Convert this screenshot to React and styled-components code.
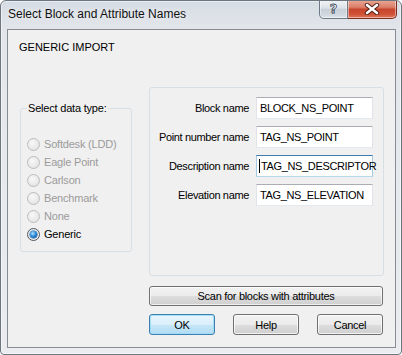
import React from "react";
import styled, { createGlobalStyle } from "styled-components";

const Global = createGlobalStyle`
  html, body { margin: 0; padding: 0; background: #ffffff; }
  body { font-family: "Liberation Sans", Arial, sans-serif; }
  #root { width: 402px; height: 355px; }
  * { box-sizing: border-box; }
`;

const Window = styled.div`
  width: 402px;
  height: 355px;
  border: 1px solid #6d757e;
  border-radius: 6px 6px 4px 4px;
  background: linear-gradient(to bottom, #d6dce3 0px, #e2e6eb 28px, #eaecef 100%);
  box-shadow: inset 0 0 0 1px rgba(255, 255, 255, 0.5);
  display: flex;
  flex-direction: column;
  overflow: hidden;
`;

const TitleBar = styled.div`
  height: 28px;
  flex: none;
  display: flex;
  align-items: flex-start;
  padding-left: 7px;
`;

const Title = styled.div`
  margin-top: 6px;
  font-size: 12px;
  line-height: 15px;
  color: #111;
  white-space: nowrap;
  text-shadow: 0 0 6px rgba(255, 255, 255, 0.9);
`;

const Controls = styled.div`
  margin-left: auto;
  margin-right: 4px;
  margin-top: -1px;
  display: flex;
`;

const CaptionButton = styled.div`
  height: 19px;
  width: ${(p) => (p.$close ? 49 : 29)}px;
  display: flex;
  align-items: center;
  justify-content: center;
  border: 1px solid ${(p) => (p.$close ? "#7c2d20" : "#6f7a86")};
  border-top: none;
  ${(p) => (p.$close ? "border-left: none;" : "")}
  border-radius: ${(p) => (p.$close ? "0 0 5px 0" : "0 0 0 5px")};
  background: ${(p) =>
    p.$close
      ? "linear-gradient(to bottom, #e9a898 0%, #dc8069 40%, #c8452d 52%, #cf5337 80%, #e1795a 100%)"
      : "linear-gradient(to bottom, #f2f4f6 0%, #dde2e8 45%, #c9d0d8 52%, #d3d9e0 85%, #e0e5ea 100%)"};
  box-shadow: inset 0 0 0 1px rgba(255, 255, 255, 0.45);
`;

const HelpGlyph = styled.span`
  font-family: "DejaVu Sans", sans-serif;
  font-size: 13px;
  line-height: 13px;
  font-weight: bold;
  color: #f5f7fa;
  -webkit-text-stroke: 0.8px #3e4a58;
  margin-top: -1px;
`;

const Client = styled.div`
  flex: 1;
  margin: 0 5px 6px 6px;
  border: 1px solid #878c92;
  background: #f0f0f0;
  padding: 11px 11px 0 11px;
  display: flex;
  flex-direction: column;
  font-size: 11px;
  color: #000;
`;

const Header = styled.div`
  font-size: 11px;
  line-height: 13px;
  height: 13px;
`;

const Body = styled.div`
  margin-top: 33px;
  display: flex;
  gap: 17px;
  align-items: flex-start;
`;

const GroupBox = styled.fieldset`
  margin: 15px 0 0 1px;
  width: 112px;
  height: 150px;
  border: 1px solid #d5dfe5;
  border-radius: 3px;
  padding: 0 0 0 6px;
  min-width: 0;
`;

const Legend = styled.legend`
  margin-left: 0;
  padding: 0 1px;
  font-size: 11px;
  line-height: 13px;
  letter-spacing: -0.2px;
`;

const RadioList = styled.div`
  padding-top: 20px;
  display: flex;
  flex-direction: column;
`;

const RadioRow = styled.div`
  height: 18px;
  display: flex;
  align-items: center;
  gap: 4px;
  color: ${(p) => (p.$disabled ? "#9b9b9b" : "#000")};
  letter-spacing: -0.2px;
  line-height: 13px;
  white-space: nowrap;
`;

const RadioCircle = styled.span`
  width: 13px;
  height: 13px;
  flex: none;
  border-radius: 50%;
  border: 1px solid ${(p) => (p.$checked ? "#4b5661" : "#bcbcbc")};
  background: ${(p) =>
    p.$checked
      ? "radial-gradient(circle at 50% 50%, #ffffff 0%, #e6e6e6 100%)"
      : "radial-gradient(circle at 40% 35%, #f8f8f8 0%, #e6e6e6 70%, #dcdcdc 100%)"};
  display: flex;
  align-items: center;
  justify-content: center;
`;

const RadioDot = styled.span`
  width: 7px;
  height: 7px;
  border-radius: 50%;
  background: radial-gradient(circle at 40% 35%, #b9e6ff 0%, #2b8ee0 45%, #0e5fa8 80%, #0a4a86 100%);
  box-shadow: 0 0 0 0.5px #1b4f80;
`;

const RightCol = styled.div`
  width: 235px;
  display: flex;
  flex-direction: column;
`;

const FieldsBox = styled.div`
  height: 189px;
  border: 1px solid #d5dfe5;
  border-radius: 3px;
  padding: 9px 10px 0 8px;
  display: grid;
  grid-template-columns: 1fr 117px;
  column-gap: 7px;
  row-gap: 7px;
  align-content: start;
  align-items: center;
`;

const FieldLabel = styled.div`
  text-align: right;
  font-size: 11px;
  line-height: 13px;
  letter-spacing: -0.35px;
  white-space: nowrap;
`;

const TextBox = styled.div`
  height: 22px;
  background: #fff;
  border: 1px solid;
  border-color: ${(p) =>
    p.$focused ? "#3d7bad #a4c9e3 #b7d9ed #a4c9e3" : "#abadb3 #e2e3ea #e3e9ef #e2e3ea"};
  padding-left: ${(p) => (p.$focused ? 2 : 3)}px;
  display: flex;
  align-items: center;
  font-size: 11px;
  line-height: 13px;
  letter-spacing: -0.35px;
  white-space: nowrap;
  overflow: visible;
`;

const Caret = styled.span`
  width: 1px;
  height: 14px;
  background: #000;
  margin-right: 1px;
  flex: none;
`;

const PushButton = styled.button`
  height: ${(p) => (p.$wide ? 20 : 21)}px;
  width: ${(p) => (p.$wide ? 234 : 66)}px;
  margin: 0;
  padding: 0;
  font-family: "Liberation Sans", Arial, sans-serif;
  font-size: 11px;
  letter-spacing: -0.3px;
  color: #000;
  border-radius: 3px;
  border: 1px solid ${(p) => (p.$default ? "#3c7fb1" : "#707070")};
  background: ${(p) =>
    p.$default
      ? "linear-gradient(to bottom, #e9f5fc 0%, #d9effb 50%, #c5e6f8 51%, #b3dcf2 100%)"
      : "linear-gradient(to bottom, #f2f2f2 0%, #ebebeb 50%, #dddddd 51%, #cfcfcf 100%)"};
  box-shadow: inset 0 0 0 1px ${(p) => (p.$default ? "rgba(160,220,250,0.9)" : "rgba(255,255,255,0.7)")};
`;

const ScanButton = styled(PushButton)`
  margin-top: 10px;
`;

const ButtonRow = styled.div`
  margin-top: 8px;
  display: flex;
  gap: 18px;
`;

const radios = [
  { label: "Softdesk (LDD)", disabled: true },
  { label: "Eagle Point", disabled: true },
  { label: "Carlson", disabled: true },
  { label: "Benchmark", disabled: true },
  { label: "None", disabled: true },
  { label: "Generic", checked: true },
];

const fields = [
  { label: "Block name", value: "BLOCK_NS_POINT" },
  { label: "Point number name", value: "TAG_NS_POINT" },
  { label: "Description name", value: "TAG_NS_DESCRIPTOR", focused: true },
  { label: "Elevation name", value: "TAG_NS_ELEVATION" },
];

function CloseIcon() {
  return (
    <svg width="16" height="12" viewBox="0 0 16 12">
      <path d="M3 2 L13 10 M13 2 L3 10" stroke="#4a1a12" strokeWidth="4.4" strokeLinecap="round" fill="none" />
      <path d="M3 2 L13 10 M13 2 L3 10" stroke="#ffffff" strokeWidth="2.6" strokeLinecap="round" fill="none" />
    </svg>
  );
}

export default function App() {
  return (
    <>
      <Global />
      <Window>
        <TitleBar>
          <Title>Select Block and Attribute Names</Title>
          <Controls>
            <CaptionButton>
              <HelpGlyph>?</HelpGlyph>
            </CaptionButton>
            <CaptionButton $close>
              <CloseIcon />
            </CaptionButton>
          </Controls>
        </TitleBar>
        <Client>
          <Header>GENERIC IMPORT</Header>
          <Body>
            <GroupBox>
              <Legend>Select data type:</Legend>
              <RadioList>
                {radios.map((r) => (
                  <RadioRow key={r.label} $disabled={r.disabled}>
                    <RadioCircle $checked={r.checked}>{r.checked && <RadioDot />}</RadioCircle>
                    {r.label}
                  </RadioRow>
                ))}
              </RadioList>
            </GroupBox>
            <RightCol>
              <FieldsBox>
                {fields.map((f) => (
                  <React.Fragment key={f.label}>
                    <FieldLabel>{f.label}</FieldLabel>
                    <TextBox $focused={f.focused}>
                      {f.focused && <Caret />}
                      {f.value}
                    </TextBox>
                  </React.Fragment>
                ))}
              </FieldsBox>
              <ScanButton $wide>Scan for blocks with attributes</ScanButton>
              <ButtonRow>
                <PushButton $default>OK</PushButton>
                <PushButton>Help</PushButton>
                <PushButton>Cancel</PushButton>
              </ButtonRow>
            </RightCol>
          </Body>
        </Client>
      </Window>
    </>
  );
}
